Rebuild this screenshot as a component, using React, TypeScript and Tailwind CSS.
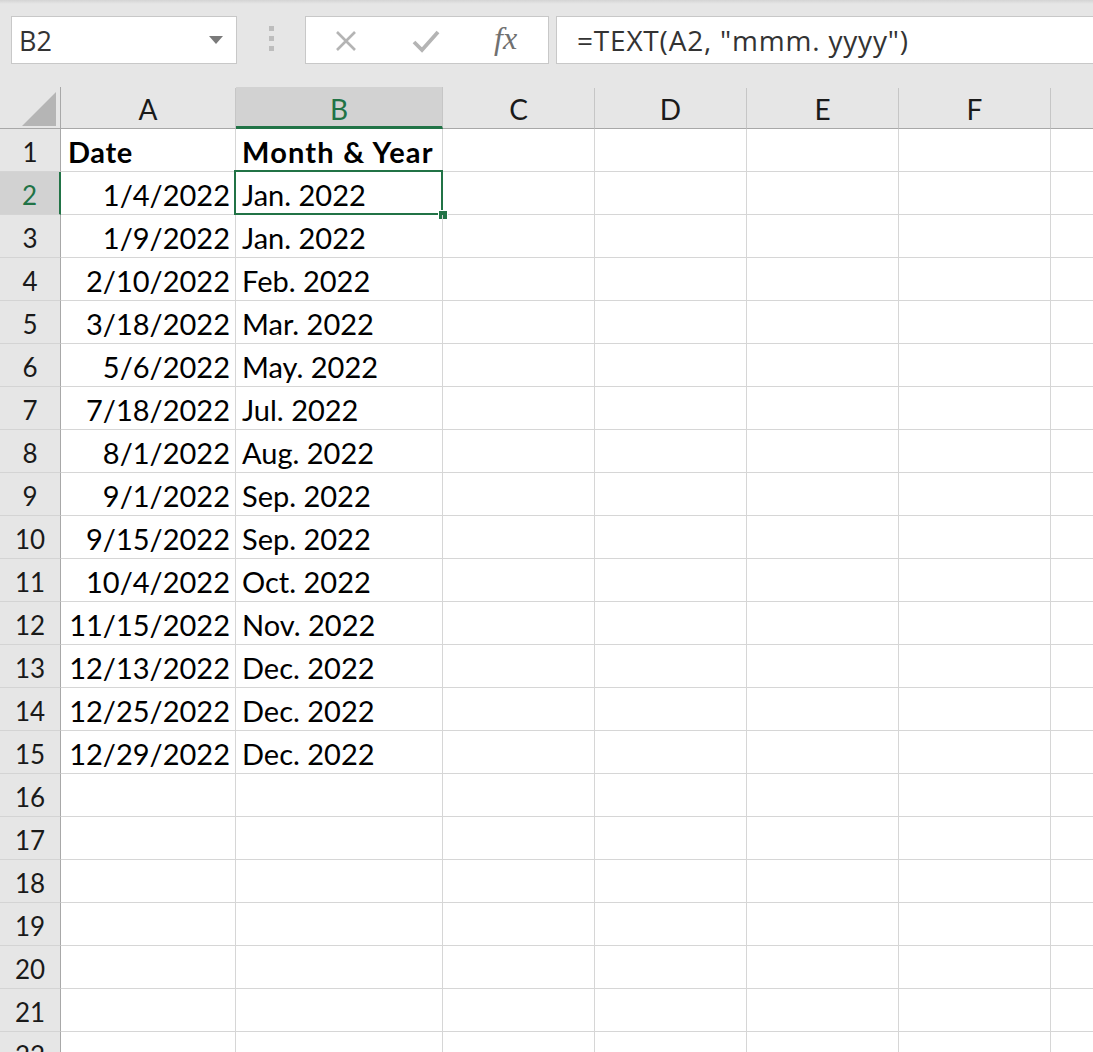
import React from 'react'

const rows: [string, string][] = [
  ['1/4/2022', 'Jan. 2022'],
  ['1/9/2022', 'Jan. 2022'],
  ['2/10/2022', 'Feb. 2022'],
  ['3/18/2022', 'Mar. 2022'],
  ['5/6/2022', 'May. 2022'],
  ['7/18/2022', 'Jul. 2022'],
  ['8/1/2022', 'Aug. 2022'],
  ['9/1/2022', 'Sep. 2022'],
  ['9/15/2022', 'Sep. 2022'],
  ['10/4/2022', 'Oct. 2022'],
  ['11/15/2022', 'Nov. 2022'],
  ['12/13/2022', 'Dec. 2022'],
  ['12/25/2022', 'Dec. 2022'],
  ['12/29/2022', 'Dec. 2022']
]

const otherCols = ['C', 'D', 'E', 'F', '']

function Toolbar() {
  return (
    <div className="relative h-[87px] bg-[#e6e6e6] flex items-start pt-[16px] pl-[11px]">
      <div className="absolute top-0 left-0 right-0 h-[4px] bg-gradient-to-b from-[#d4d4d4] to-[#e6e6e6]" />
      {/* name box */}
      <div className="w-[226px] h-[48px] bg-white border border-[#c8c8c8] flex items-center justify-between pl-[7px] pr-[13px]">
        <span className="text-[27px] text-[#333] leading-none font-['Open_Sans',sans-serif]">B2</span>
        <svg width="14" height="8" viewBox="0 0 14 8">
          <path d="M0 0 L14 0 L7 8 Z" fill="#7a7a7a" />
        </svg>
      </div>
      {/* splitter dots */}
      <div className="ml-[32px] mt-[10px] flex flex-col gap-[5px]">
        <div className="w-[5px] h-[5px] bg-[#bdbdbd]" />
        <div className="w-[5px] h-[5px] bg-[#bdbdbd]" />
        <div className="w-[5px] h-[5px] bg-[#bdbdbd]" />
      </div>
      {/* buttons */}
      <div className="ml-[31px] w-[244px] h-[48px] bg-white border border-[#c8c8c8] relative">
        <svg className="absolute left-[29px] top-[13px]" width="22" height="22" viewBox="0 0 22 22">
          <path d="M2 2 L20 20 M20 2 L2 20" stroke="#b4b4b4" strokeWidth="2.6" />
        </svg>
        <svg className="absolute left-[106px] top-[12px]" width="28" height="24" viewBox="0 0 28 24">
          <path d="M2 13 L10 21 L26 3" stroke="#b4b4b4" strokeWidth="3.8" fill="none" />
        </svg>
        <span className="absolute left-[188px] top-[5px] text-[32px] italic leading-none text-[#707070] font-['Liberation_Serif',serif]">
          fx
        </span>
      </div>
      {/* formula */}
      <div className="ml-[7px] flex-1 h-[48px] bg-white border border-[#c8c8c8] border-r-0 flex items-center pl-[20px]">
        <span className="text-[28px] tracking-[0.8px] text-[#333] leading-none font-['Open_Sans',sans-serif] whitespace-nowrap">
          =TEXT(A2, &quot;mmm. yyyy&quot;)
        </span>
      </div>
    </div>
  )
}

function HeaderRow() {
  return (
    <div className="flex h-[42px] bg-[#e6e6e6] font-['Lato',sans-serif] text-[28px] text-[#1a1a1a]">
      <div className="w-[61px] shrink-0 border-r border-b border-[#a8a8a8] flex items-end justify-end pr-[4px] pb-[2px]">
        <svg width="34" height="34" viewBox="0 0 34 34">
          <path d="M34 0 L34 34 L0 34 Z" fill="#b5b5b5" />
        </svg>
      </div>
      <div className="w-[175px] shrink-0 border-r border-r-[#c6c6c6] border-b border-b-[#a8a8a8] flex items-end justify-center pb-[4px] leading-[30px] mt-[1px]">
        A
      </div>
      <div className="w-[207px] shrink-0 bg-[#d2d2d2] border-r border-r-[#c6c6c6] border-b-[3px] border-b-[#217346] flex items-end justify-center pb-[2px] leading-[30px] text-[#217346]">
        B
      </div>
      {otherCols.map((c, i) => (
        <div
          key={i}
          className="w-[152px] shrink-0 border-r border-r-[#c6c6c6] border-b border-b-[#a8a8a8] flex items-end justify-center pb-[4px] leading-[30px] mt-[1px]"
        >
          {c}
        </div>
      ))}
    </div>
  )
}

function RowHeader({ n, active }: { n: number; active?: boolean }) {
  return (
    <div
      className={`w-[61px] shrink-0 border-b border-b-[#d4d4d4] flex items-center justify-center pt-[4px] text-[26px] leading-none ${
        active
          ? 'bg-[#d2d2d2] text-[#217346] border-r-[2px] border-r-[#217346]'
          : 'bg-[#e6e6e6] text-[#1a1a1a] border-r border-r-[#a8a8a8]'
      }`}
    >
      {n}
    </div>
  )
}

function Row({ n, a, b, bold, selected }: { n: number; a?: string; b?: string; bold?: boolean; selected?: boolean }) {
  const cell = 'shrink-0 border-r border-b border-[#d6d6d6] flex items-end pb-[4px] leading-[30px] whitespace-nowrap'
  return (
    <div className="flex h-[43px] font-['Lato',sans-serif] text-[29px] text-black">
      <RowHeader n={n} active={selected} />
      <div className={`${cell} w-[175px] ${bold ? 'justify-start pl-[7px] font-bold tracking-[0.6px]' : 'justify-end pr-[5px]'}`}>{a}</div>
      <div className={`${cell} w-[207px] pl-[6px] relative ${bold ? 'font-bold tracking-[1.2px]' : ''}`}>
        {b}
        {selected && (
          <>
            <div className="absolute left-[-2px] top-[-2px] right-[-1px] bottom-[-1px] border-[2px] border-[#217346]" />
            <div className="absolute right-[-6px] bottom-[-6px] w-[10px] h-[10px] bg-[#217346] border-[1.5px] border-white" />
          </>
        )}
      </div>
      {otherCols.map((c, i) => (
        <div key={i} className={`${cell} w-[152px]`} />
      ))}
    </div>
  )
}

export default function App() {
  return (
    <div className="w-[1093px] h-[1052px] overflow-hidden bg-white">
      <Toolbar />
      <HeaderRow />
      <Row n={1} a="Date" b="Month & Year" bold />
      {rows.map(([a, b], i) => (
        <Row key={i} n={i + 2} a={a} b={b} selected={i === 0} />
      ))}
      {Array.from({ length: 7 }, (_, i) => (
        <Row key={`e${i}`} n={i + 16} />
      ))}
    </div>
  )
}
